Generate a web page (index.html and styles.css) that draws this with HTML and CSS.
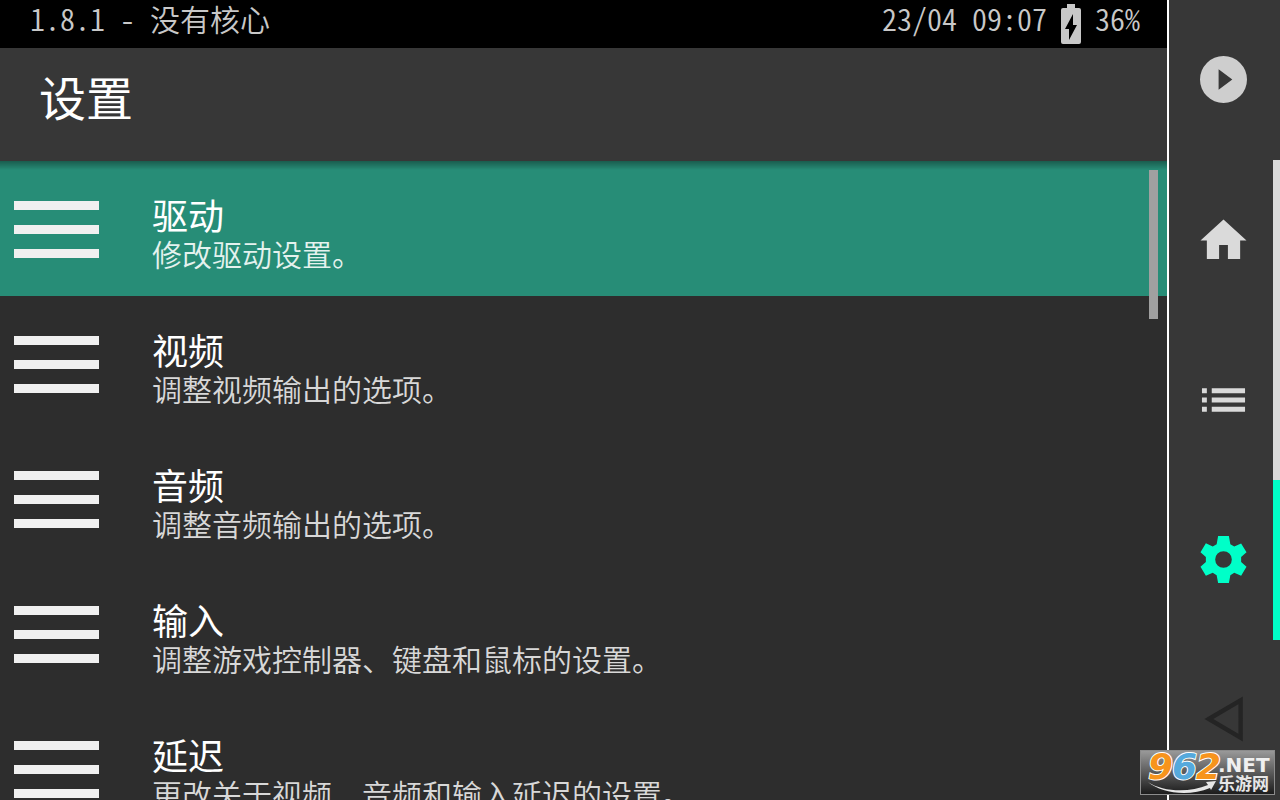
FILE: index.html
```html
<!DOCTYPE html>
<html lang="zh-CN">
<head>
  <meta charset="UTF-8">
  <meta name="viewport" content="width=device-width, initial-scale=1.0">
  <title>设置</title>
  <link rel="stylesheet" href="styles.css">
</head>
<body>
  <div class="app">
    <main class="main">
      <div class="status-bar">
        <span>1.8.1 - 没有核心</span>
        <div class="status-right">
          <span>23/04 09:07</span>
          <svg class="battery" viewBox="0 0 20 40" aria-hidden="true">
            <path fill="#c8c8c8" d="M6 0h8v4h4a2 2 0 0 1 2 2v32a2 2 0 0 1-2 2H2a2 2 0 0 1-2-2V6a2 2 0 0 1 2-2h4z"/>
            <path fill="#000" d="M12 10 4 25h4v11l8-15h-4z"/>
          </svg>
          <span>36%</span>
        </div>
      </div>

      <header class="header">
        <h1>设置</h1>
      </header>

      <div class="list">
        <button class="item active">
          <span class="bars"><i></i><i></i><i></i></span>
          <span class="label"><b>驱动</b><small>修改驱动设置。</small></span>
        </button>
        <button class="item">
          <span class="bars"><i></i><i></i><i></i></span>
          <span class="label"><b>视频</b><small>调整视频输出的选项。</small></span>
        </button>
        <button class="item">
          <span class="bars"><i></i><i></i><i></i></span>
          <span class="label"><b>音频</b><small>调整音频输出的选项。</small></span>
        </button>
        <button class="item">
          <span class="bars"><i></i><i></i><i></i></span>
          <span class="label"><b>输入</b><small>调整游戏控制器、键盘和鼠标的设置。</small></span>
        </button>
        <button class="item">
          <span class="bars"><i></i><i></i><i></i></span>
          <span class="label"><b>延迟</b><small>更改关于视频、音频和输入延迟的设置。</small></span>
        </button>
        <div class="scroll-thumb"></div>
      </div>
    </main>

    <nav class="sidebar">
      <button class="tab" aria-label="运行">
        <svg viewBox="0 0 48 48"><path fill="#cecece" fill-rule="evenodd" d="M24 0a24 24 0 1 0 0 48 24 24 0 0 0 0-48zM19 13.500v21L33 24z"/></svg>
      </button>
      <button class="tab marked" aria-label="主页">
        <svg viewBox="0 0 48 48"><path fill="#dadada" d="M24 3.500 0.500 25H7v19h12.500V29.500h9V44H41V25h6.500z"/></svg>
      </button>
      <button class="tab marked" aria-label="列表">
        <svg viewBox="0 0 48 48"><path fill="#dadada" d="M2 12.500h5v5H2zM12 12.500h34v5H12zM2 22h5v5H2zM12 22h34v5H12zM2 31.500h5v5H2zM12 31.500h34v5H12z"/></svg>
      </button>
      <button class="tab current" aria-label="设置">
        <svg viewBox="0 0 48 48"><path fill="#00ffc8" fill-rule="evenodd" d="M18.500 0h11l1.500 8.500 4 2.200 7-3L47.500 16.500 42 21.500v5L47.500 31.500 42 40.500 35 37.500 31 40l-1.500 8h-11L17 40l-4-2.500-7 3L0.500 31.500 6 26.500v-5L0.500 16.500 6 7.500l7 3.200 4-2.200zM24 15.500a8.500 8.500 0 1 0 0 17 8.500 8.500 0 0 0 0-17z"/></svg>
      </button>
      <button class="tab" aria-label="返回">
        <svg viewBox="0 0 48 48"><path fill="none" stroke="#242424" stroke-width="4.500" d="M9 23.500 41.500 4.500v38z"/></svg>
      </button>
    </nav>
  </div>

  <div class="watermark">
    <svg viewBox="0 0 133 43">
      <path fill="#e6e6e6" d="M7 31c15 10 41 11 60 3l-2-3 10-1-5 9-1-2C47 46 20 42 7 31z"/>
      <g class="logo-digits">
        <text class="orange" x="7" y="28">9</text>
        <text class="blue" x="31" y="28">6</text>
        <text class="orange" x="55" y="28">2</text>
      </g>
      <text class="logo-net" x="77" y="21">.NET</text>
      <text class="logo-name" x="77" y="39">乐游网</text>
    </svg>
  </div>
</body>
</html>
```

FILE: styles.css
```css
* {
  box-sizing: border-box;
}
body {
  margin: 0;
  background-color: #2d2d2d;
  color: #fff;
  font-family: "Noto Sans CJK SC", sans-serif;
}
button {
  border: none;
  padding: 0;
  background: none;
  color: inherit;
  font-family: inherit;
  cursor: pointer;
}
.app {
  display: flex;
  height: 100vh;
  overflow: hidden;
}
.main {
  flex: 1;
  min-width: 0;
  display: flex;
  flex-direction: column;
}

/* status bar */
.status-bar {
  flex: none;
  display: flex;
  justify-content: space-between;
  height: 48px;
  padding: 0 27px 0 30px;
  background-color: #000;
  color: #c8c8c8;
  font-size: 30px;
  font-weight: 350;
  line-height: 36px;
  font-feature-settings: "hwid";
  white-space: pre;
}
.status-right {
  display: flex;
  gap: 14px;
}
.battery {
  width: 20px;
  height: 40px;
  margin-top: 4px;
}

.header {
  flex: none;
  height: 113px;
  padding-left: 39px;
  background-color: #373737;
}
h1 {
  margin: 0;
  font-size: 47px;
  font-weight: 400;
  line-height: 96px;
}

/* settings list */
.list {
  position: relative;
  flex: 1;
  min-height: 0;
  overflow: hidden;
}
.list::before {
  content: "";
  position: absolute;
  top: 0;
  left: 0;
  right: 0;
  height: 9px;
  background: linear-gradient(rgba(0, 0, 0, 0.35), rgba(0, 0, 0, 0));
}
.item {
  display: flex;
  align-items: flex-start;
  width: 100%;
  height: 135px;
  padding: 33px 14px 0;
  gap: 53px;
  text-align: left;
}
.item.active {
  background-color: #278d77;
}
.bars {
  flex: none;
  display: flex;
  flex-direction: column;
  gap: 15px;
  width: 85px;
  padding-top: 7px;
}
.bars i {
  height: 9px;
  background-color: #f0f0f0;
}
.label b,
.label small {
  display: block;
  font-weight: 400;
  white-space: nowrap;
}
.label b {
  font-size: 36px;
  line-height: 40px;
}
.label small {
  color: #d8d8d8;
  font-size: 30px;
  font-weight: 350;
  line-height: 38px;
}
.active small {
  color: #e4f2ee;
}
.scroll-thumb {
  position: absolute;
  top: 9px;
  right: 9px;
  width: 9px;
  height: 149px;
  background-color: #a0a0a0;
}

/* right side tabs */
.sidebar {
  flex: none;
  display: grid;
  grid-template-rows: repeat(5, 1fr);
  width: 113px;
  border-left: 2px solid #fff;
  background-color: #373737;
}
.tab {
  display: flex;
  align-items: center;
  justify-content: center;
  padding: 0 2px 1px 0;
}
.tab svg {
  width: 47px;
  height: 47px;
}
.tab.marked {
  box-shadow: inset -7px 0 #dadada;
}
.tab.current {
  box-shadow: inset -7px 0 #00ffc8;
}

/* site mark */
.watermark {
  position: absolute;
  right: 5px;
  bottom: 5px;
  width: 135px;
  height: 45px;
  border: 1px solid #8c8c8c;
  background: linear-gradient(#999, #1c1c1c);
}
.watermark svg {
  display: block;
  width: 100%;
  height: 100%;
}
.logo-digits {
  font: italic bold 36px "DejaVu Sans", sans-serif;
  stroke: #fff;
  stroke-width: 2px;
  paint-order: stroke;
}
.orange {
  fill: #f7941d;
}
.blue {
  fill: #55a9dc;
}
.logo-net {
  font: bold 20px "DejaVu Sans", sans-serif;
  fill: #f0f0f0;
}
.logo-name {
  font: bold 17px "Noto Sans CJK SC", sans-serif;
  fill: #e6e6e6;
}
```
